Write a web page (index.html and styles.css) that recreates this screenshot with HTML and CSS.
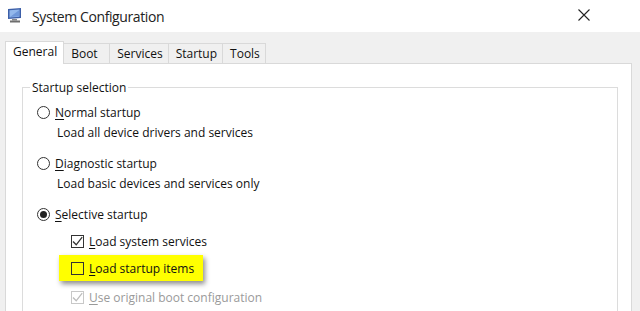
FILE: index.html
```html
<!DOCTYPE html>
<html lang="en">
<head>
    <meta charset="UTF-8">
    <title>System Configuration</title>
    <link rel="stylesheet" href="styles.css">
</head>
<body>

<div class="titlebar">
    <svg class="app-icon" width="16" height="16" viewBox="0 0 16 16">
        <path d="M1 2 L14 1 L14 11 L1 12 Z" fill="#3c5fa8"/>
        <path d="M2.5 3.3 L12.5 2.6 L12.5 9.7 L2.5 10.5 Z" fill="#93b8ec"/>
        <path d="M3 10 L12 3.2 L12 9.3 Z" fill="#6f98da"/>
        <rect x="5" y="12" width="5" height="1.5" fill="#8a8a8a"/>
        <rect x="3" y="13.5" width="10" height="2" fill="#6e6e6e"/>
    </svg>
    <span class="title">System Configuration</span>
    <svg class="close" width="12" height="12" viewBox="0 0 12 12">
        <path d="M0.5 0.5 L11.5 11.5 M11.5 0.5 L0.5 11.5" stroke="#222" stroke-width="1.1"/>
    </svg>
</div>

<div class="dialog">
    <div class="tabs">
        <div class="tab active">General</div>
        <div class="tab short">Boot</div>
        <div class="tab">Services</div>
        <div class="tab">Startup</div>
        <div class="tab">Tools</div>
    </div>

    <div class="panel">
        <fieldset class="group">
            <legend>Startup selection</legend>

            <div class="option">
                <span class="radio"></span>
                <span><u>N</u>ormal startup</span>
            </div>
            <div class="desc">Load all device drivers and services</div>

            <div class="option">
                <span class="radio"></span>
                <span><u>D</u>iagnostic startup</span>
            </div>
            <div class="desc">Load basic devices and services only</div>

            <div class="option">
                <span class="radio checked"></span>
                <span><u>S</u>elective startup</span>
            </div>

            <div class="check-row first">
                <span class="checkbox">
                    <svg width="11" height="11" viewBox="0 0 11 11"><path d="M1 5.5 L4.2 8.8 L10.2 1.2" fill="none" stroke="#333" stroke-width="1.3"/></svg>
                </span>
                <span><u>L</u>oad system services</span>
            </div>

            <div class="highlight">
                <div class="check-row">
                    <span class="checkbox"></span>
                    <span><u>L</u>oad startup items</span>
                </div>
            </div>

            <div class="check-row disabled">
                <span class="checkbox">
                    <svg width="11" height="11" viewBox="0 0 11 11"><path d="M1 5.5 L4.2 8.8 L10.2 1.2" fill="none" stroke="#bcbcbc" stroke-width="1.3"/></svg>
                </span>
                <span><u>U</u>se original boot configuration</span>
            </div>
        </fieldset>
    </div>
</div>

</body>
</html>
```

FILE: styles.css
```css
/* Window */
body {
    margin: 0;
    width: 640px;
    height: 311px;
    overflow: hidden;
    background: #f0f0f0;
    font-family: 'Open Sans', 'Noto Sans', sans-serif;
    font-size: 12px;
    color: #111;
}

u {
    text-decoration-thickness: 1px;
    text-underline-offset: 2px;
}

/* Title bar */
.titlebar {
    height: 32px;
    background: #fff;
    display: flex;
    align-items: center;
}
.app-icon {
    margin-left: 7px;
    margin-top: -2px;
}
.title {
    margin-left: 9px;
    font-size: 14px;
    letter-spacing: -0.4px;
    color: #222;
    flex: 1;
}
.close {
    margin-right: 50px;
    margin-top: -2px;
}

/* Tabs */
.dialog {
    padding: 9px 8px 0 5px;
}
.tabs {
    display: flex;
    align-items: flex-end;
    height: 22px;
}
.tab {
    height: 19px;
    line-height: 19px;
    padding: 0 5px 0 7px;
    border: 1px solid #d9d9d9;
    border-bottom: none;
    border-left: none;
    background: #f0f0f0;
    color: #111;
}
.tab.short {
    width: 33px;
}
.tab.active {
    height: 22px;
    line-height: 20px;
    padding: 0 6px 0 7px;
    background: #fff;
    border-left: 1px solid #d9d9d9;
    position: relative;
    z-index: 1;
    margin-bottom: -1px;
}

/* Panel */
.panel {
    background: #fff;
    border: 1px solid #d9d9d9;
    height: 260px;
    padding: 15px 13px 0 16px;
}

/* Group box */
.group {
    margin: 0;
    padding: 8px 0 0 14px;
    border: 1px solid #dcdcdc;
    min-height: 240px;
}
.group legend {
    padding: 0 2px;
    margin-left: -7px;
    color: #111;
}

/* Radio options */
.option {
    display: flex;
    align-items: center;
    gap: 5px;
    height: 16px;
}
.radio {
    width: 11px;
    height: 11px;
    border: 1px solid #333;
    border-radius: 50%;
    background: #fff;
    display: flex;
    align-items: center;
    justify-content: center;
}
.radio.checked::after {
    content: "";
    width: 7px;
    height: 7px;
    border-radius: 50%;
    background: #222;
}
.desc {
    margin: 4px 0 15px 20px;
    height: 16px;
}

/* Checkboxes */
.check-row {
    display: flex;
    align-items: center;
    gap: 5px;
    height: 16px;
    margin-left: 34px;
}
.check-row.first {
    margin-top: 11px;
}
.checkbox {
    width: 11px;
    height: 11px;
    border: 1px solid #333;
    background: #fff;
    display: flex;
    align-items: center;
    justify-content: center;
}
.check-row.disabled {
    margin-top: 8px;
    color: #9a9a9a;
}
.check-row.disabled .checkbox {
    border-color: #c8c8c8;
}

/* Yellow marker */
.highlight {
    width: 144px;
    height: 26px;
    margin: 6px 0 0 22px;
    background: #ffff00;
    box-shadow: 2px 3px 5px rgba(0, 0, 0, 0.45);
    display: flex;
    align-items: center;
}
.highlight .check-row {
    margin-left: 12px;
}
.highlight .checkbox {
    background: transparent;
}
```
